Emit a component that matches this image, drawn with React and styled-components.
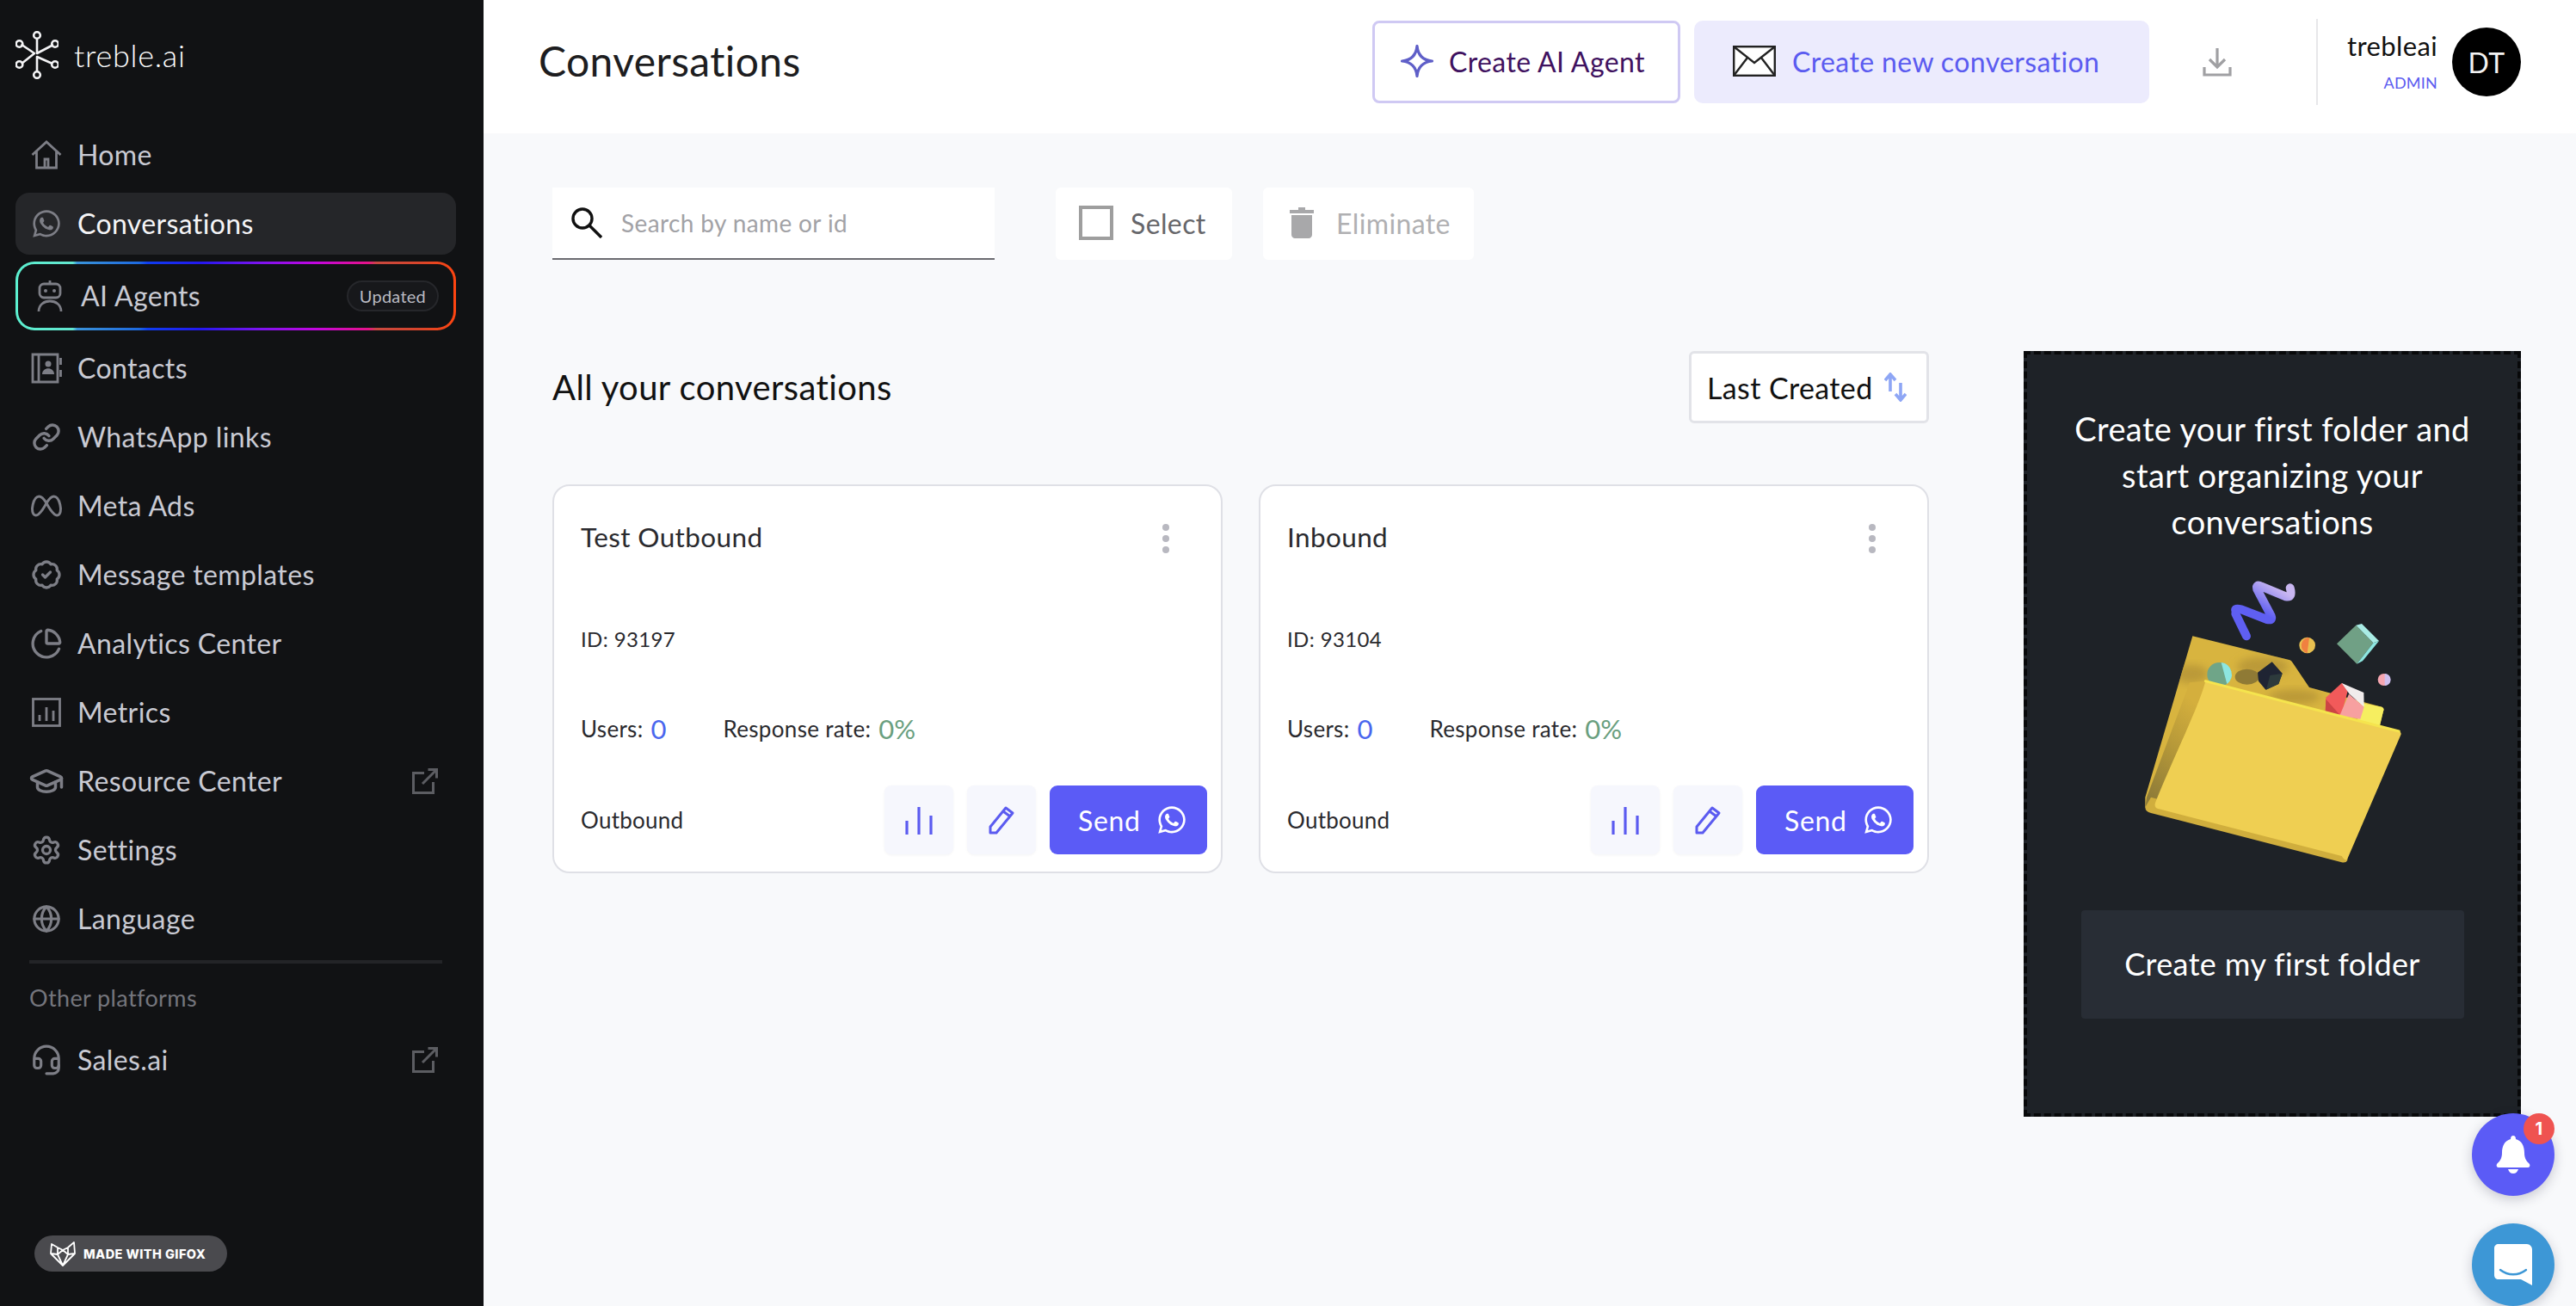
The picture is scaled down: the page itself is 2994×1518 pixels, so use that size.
import React from "react";
import styled, { createGlobalStyle } from "styled-components";
import { FaWhatsapp } from "react-icons/fa";
import { TbBrandMeta } from "react-icons/tb";
import { Link as LinkIcon, BadgeCheck, ChartPie, GraduationCap, Settings, Globe, Headset } from "lucide-react";

const Global = createGlobalStyle`
  html, body { margin: 0; padding: 0; background: #f8f9fb; }
  * { box-sizing: border-box; }
  body { font-family: "Lato", "Inter", sans-serif; letter-spacing: 0.024em; }
`;

const Page = styled.div`
  position: relative;
  display: flex;
  width: 2994px;
  height: 1518px;
  overflow: hidden;
`;

const Sidebar = styled.aside`
  width: 562px;
  flex: none;
  display: flex;
  flex-direction: column;
  background: #111214;
  padding: 0 32px 40px 18px;
  color: #c9cad3;
`;

const LogoRow = styled.div`
  height: 144px;
  padding-top: 36px;
  display: flex;
  align-items: flex-start;
  gap: 18px;
`;

const LogoText = styled.span`
  font-size: 36px;
  font-weight: 300;
  line-height: 56px;
  color: #fff;
  letter-spacing: 0.02em;
`;

const NavList = styled.nav`
  display: flex;
  flex-direction: column;
  gap: 8px;
`;

const NavRow = styled.div`
  height: 72px;
  display: flex;
  align-items: center;
  gap: 18px;
  padding: 0 21px 0 18px;
  border-radius: 16px;
  font-size: 32px;
  background: ${(p) => (p.$active ? "#252629" : "transparent")};
  color: ${(p) => (p.$active ? "#f5f5f7" : "#c9cad3")};
`;

const GradientRow = styled(NavRow)`
  height: 80px;
  padding: 0 17px 0 19px;
  border: 3.5px solid transparent;
  border-radius: 22px;
  background:
    linear-gradient(#111214, #111214) padding-box,
    linear-gradient(90deg, #5cf0d0 0%, #62e6cf 13%, #3a93d9 14%, #1e6ae0 28%, #0f3df0 30%, #2418f0 42%, #7a14f0 55%, #c206e0 68%, #e5128a 80%, #c84840 82%, #d9452a 92%, #ff4510 100%) border-box;
`;

const NavIcon = styled.span`
  width: 36px;
  height: 36px;
  flex: none;
  display: flex;
  align-items: center;
  justify-content: center;
  color: #7d7e86;
  & > svg { flex: none; }
`;

const NavLabel = styled.span`
  flex: 1;
  white-space: nowrap;
  padding-bottom: 2px;
`;

const UpdatedChip = styled.span`
  height: 36px;
  padding: 0 13px;
  display: flex;
  align-items: center;
  border: 2px solid #26272b;
  border-radius: 18px;
  background: #17181b;
  color: #b9bac2;
  font-size: 20px;
  letter-spacing: 0.012em;
`;

const ExternalMark = styled.span`
  display: flex;
  color: #5c5d62;
`;

const SideRule = styled.div`
  height: 4px;
  margin: 12px 16px 0 16px;
  background: #232427;
`;

const OtherHeading = styled.div`
  margin: 20px 0 16px 16px;
  font-size: 27px;
  line-height: 40px;
  color: #74757c;
`;

const GifoxBadge = styled.div`
  align-self: flex-start;
  margin: auto 0 0 22px;
  width: 224px;
  height: 42px;
  border-radius: 21px;
  background: #4a4a4e;
  color: #fff;
  display: flex;
  align-items: center;
  gap: 9px;
  padding-left: 18px;
  font-family: "Inter", sans-serif;
  font-size: 14.5px;
  font-weight: 800;
  letter-spacing: 0.03em;
  white-space: nowrap;
`;

const Main = styled.main`
  flex: 1;
  min-width: 0;
  display: flex;
  flex-direction: column;
`;

const Header = styled.header`
  height: 155px;
  flex: none;
  background: #fff;
  display: flex;
  padding: 24px 64px 0 64px;
  align-items: flex-start;
`;

const PageTitle = styled.h1`
  flex: 1;
  margin: 0;
  font-size: 48px;
  font-weight: 400;
  line-height: 94px;
  color: #1d1d20;
`;

const OutlineButton = styled.div`
  width: 358px;
  height: 96px;
  display: flex;
  align-items: center;
  gap: 18px;
  padding: 0 0 2px 30px;
  border: 3px solid #cfc9f3;
  border-radius: 8px;
  background: #fff;
  color: #3f1260;
  font-size: 32px;
`;

const SoftButton = styled.div`
  width: 529px;
  height: 96px;
  margin-left: 16px;
  display: flex;
  align-items: center;
  gap: 19px;
  padding: 0 0 2px 45px;
  border-radius: 10px;
  background: #ecebfd;
  color: #5b5bf0;
  font-size: 32px;
  white-space: nowrap;
`;

const DownloadSlot = styled.div`
  width: 194px;
  height: 96px;
  padding-right: 36px;
  display: flex;
  align-items: center;
  justify-content: center;
  color: #a0a0a3;
`;

const UserBox = styled.div`
  width: 238px;
  height: 100px;
  margin-top: -2px;
  border-left: 2px solid #e7e7ea;
  display: flex;
  align-items: center;
  justify-content: flex-end;
  gap: 17px;
`;

const UserText = styled.div`
  display: flex;
  flex-direction: column;
  align-items: flex-end;
  gap: 18px;
  padding-bottom: 2px;
`;

const UserName = styled.span`
  font-size: 31px;
  line-height: 32px;
  color: #111;
`;

const UserRole = styled.span`
  font-size: 18px;
  line-height: 18px;
  color: #5b5bf0;
  letter-spacing: 0.012em;
`;

const Avatar = styled.div`
  width: 80px;
  height: 80px;
  border-radius: 50%;
  background: #000;
  color: #f2f2f2;
  display: flex;
  align-items: center;
  justify-content: center;
  font-size: 32px;
`;

const Content = styled.section`
  flex: 1;
  background: #f8f9fb;
  padding: 63px 0 0 80px;
`;

const Toolbar = styled.div`
  height: 84px;
  display: flex;
`;

const SearchBox = styled.div`
  width: 514px;
  height: 84px;
  background: #fff;
  border-bottom: 2px solid #6b6b70;
  display: flex;
  align-items: center;
  gap: 22px;
  padding-left: 22px;
  font-size: 28px;
  color: #a2a2a6;
`;

const ToolButton = styled.div`
  width: ${(p) => p.$width}px;
  height: 84px;
  margin-left: ${(p) => p.$gap}px;
  background: #fff;
  border-radius: 6px;
  display: flex;
  align-items: center;
  gap: ${(p) => p.$inner}px;
  padding: 0 0 2px ${(p) => p.$pad}px;
  font-size: 32px;
  letter-spacing: 0.012em;
  color: ${(p) => p.$color};
`;

const CheckBox = styled.span`
  width: 40px;
  height: 40px;
  border: 4px solid #9e9e9e;
`;

const Columns = styled.div`
  display: flex;
  gap: 110px;
  margin-top: 106px;
`;

const LeftColumn = styled.div`
  width: 1600px;
`;

const SectionHead = styled.div`
  height: 84px;
  display: flex;
  align-items: center;
  justify-content: space-between;
`;

const SectionTitle = styled.h2`
  margin: 0;
  font-size: 40px;
  font-weight: 400;
  color: #111;
`;

const SortButton = styled.div`
  width: 279px;
  height: 84px;
  background: #fff;
  border: 3px solid #e2e3e8;
  border-radius: 6px;
  display: flex;
  align-items: center;
  gap: 13px;
  padding-left: 18px;
  font-size: 34px;
  color: #111;
  white-space: nowrap;
`;

const CardGrid = styled.div`
  display: grid;
  grid-template-columns: 779px 779px;
  gap: 42px;
  margin-top: 71px;
`;

const Card = styled.article`
  height: 452px;
  background: #fff;
  border: 2.5px solid #dfe0e6;
  border-radius: 20px;
  padding: 31px 16px 0 31px;
  color: #2a2a2e;
`;

const CardTop = styled.div`
  height: 56px;
  display: flex;
  align-items: center;
  justify-content: space-between;
  padding-right: 44px;
  font-size: 31.5px;
`;

const Dots = styled.div`
  display: flex;
  flex-direction: column;
  gap: 5px;
  margin-top: 4px;
`;

const Dot = styled.span`
  width: 8px;
  height: 8px;
  border-radius: 50%;
  background: #b8b8c0;
`;

const IdRow = styled.div`
  height: 40px;
  margin-top: 70px;
  display: flex;
  align-items: center;
  font-size: 24px;
`;

const StatsRow = styled.div`
  height: 40px;
  margin-top: 65px;
  display: flex;
  align-items: center;
  font-size: 26px;
  letter-spacing: 0.012em;
`;

const StatLabel = styled.span`
  margin-left: ${(p) => p.$offset || 0}px;
`;

const StatValue = styled.span`
  margin-left: 9px;
  font-size: 31px;
  letter-spacing: 0;
  color: ${(p) => p.$color};
`;

const CardFoot = styled.div`
  height: 80px;
  margin-top: 46px;
  display: flex;
  align-items: center;
  gap: 16px;
  font-size: 26px;
  letter-spacing: 0.01em;
`;

const FootLabel = styled.span`
  flex: 1;
`;

const IconAction = styled.div`
  width: 80px;
  height: 80px;
  border-radius: 8px;
  background: #f6f7fd;
  box-shadow: 0 1px 3px rgba(60, 60, 90, 0.06);
  display: flex;
  align-items: center;
  justify-content: center;
  color: #5b5bf0;
`;

const SendButton = styled.div`
  width: 183px;
  height: 80px;
  border-radius: 9px;
  background: #5b5bf6;
  color: #fff;
  font-size: 32px;
  letter-spacing: 0.02em;
  display: flex;
  align-items: center;
  justify-content: flex-start;
  gap: 18px;
  padding-left: 33px;
`;

const FolderPanel = styled.aside`
  width: 578px;
  height: 890px;
  background: #1e2227;
  border: 4px dashed #08090a;
  display: flex;
  flex-direction: column;
  align-items: center;
  padding-top: 59px;
  color: #fff;
`;

const PanelText = styled.p`
  margin: 0;
  width: 500px;
  text-align: center;
  font-size: 38px;
  line-height: 54px;
`;

const Illustration = styled.svg`
  margin: 27px 0 0 8px;
  flex: none;
`;

const PanelButton = styled.div`
  width: 445px;
  height: 126px;
  margin-top: 38px;
  padding-bottom: 2px;
  border-radius: 4px;
  background: #282d35;
  display: flex;
  align-items: center;
  justify-content: center;
  font-size: 36px;
`;

const FloatStack = styled.div`
  position: absolute;
  right: 25px;
  bottom: 0;
  display: flex;
  flex-direction: column;
  gap: 32px;
`;

const Fab = styled.div`
  position: relative;
  width: 96px;
  height: 96px;
  border-radius: 50%;
  background: ${(p) => p.$bg};
  box-shadow: 0 4px 14px rgba(30, 30, 60, 0.22);
  display: flex;
  align-items: center;
  justify-content: center;
`;

const FabBadge = styled.span`
  position: absolute;
  top: 0;
  right: 0;
  width: 36px;
  height: 36px;
  border-radius: 50%;
  background: #ef5350;
  color: #fff;
  display: flex;
  align-items: center;
  justify-content: center;
  font-family: "Inter", sans-serif;
  font-size: 20px;
  font-weight: 700;
`;

const Logo = () => (
  <svg width="50" height="56" viewBox="0 0 50 56" fill="none" stroke="#f4f4f6" strokeWidth="2.6">
    <path d="M25 9V26L44 16M6.500 15.500L22 26L7 38M25 47V30L43 38" strokeLinejoin="round" />
    <circle cx="25" cy="5" r="3.800" />
    <circle cx="25" cy="51" r="3.800" />
    <circle cx="4.500" cy="15" r="3.800" />
    <circle cx="46" cy="15" r="3.800" />
    <circle cx="4.500" cy="39" r="3.800" />
    <circle cx="46" cy="39" r="3.800" />
  </svg>
);

const HomeGlyph = () => (
  <svg width="36" height="34" viewBox="0 0 36 34" fill="none" stroke="currentColor" strokeWidth="2.800">
    <path d="M1.500 17L18 2L34.500 17M6.500 13V32H29.500V13M16 32V22H20V32" />
  </svg>
);

const BotGlyph = () => (
  <svg width="30" height="37" viewBox="0 0 30 37" fill="none" stroke="currentColor" strokeWidth="2.800">
    <rect x="3" y="4" width="24" height="16" rx="5" />
    <circle cx="10" cy="12" r="2" fill="currentColor" stroke="none" />
    <circle cx="20" cy="12" r="2" fill="currentColor" stroke="none" />
    <path d="M15 0V4M2 36C2 20 28 20 28 36" />
  </svg>
);

const ContactsGlyph = () => (
  <svg width="36" height="36" viewBox="0 0 36 36" fill="none" stroke="currentColor" strokeWidth="2.800">
    <path d="M2 2H31V34H2ZM9 2V34" />
    <circle cx="20" cy="13" r="3.500" fill="currentColor" stroke="none" />
    <path d="M13 25C13 16 27 16 27 25Z" fill="currentColor" stroke="none" />
    <path d="M34.500 6V14M34.500 20V28" />
  </svg>
);

const MetricsGlyph = () => (
  <svg width="34" height="34" viewBox="0 0 34 34" fill="none" stroke="currentColor" strokeWidth="2.800">
    <rect x="1.500" y="1.500" width="31" height="31" />
    <path d="M9 27V20M17 27V11M25 27V15" />
  </svg>
);

const ExternalGlyph = () => (
  <svg width="30" height="30" viewBox="0 0 30 30" fill="none" stroke="currentColor" strokeWidth="3">
    <path d="M14 5.500H1.500V28.500H24.500V16M12 18L28 2M18.500 1.500H28.500V11.500" />
  </svg>
);

const FoxGlyph = () => (
  <svg width="30" height="30" viewBox="0 0 30 30" fill="none" stroke="#fff" strokeWidth="1.800" strokeLinejoin="round">
    <path d="M2 4L9 8L15 11L21 8L28 2L29 15L15 29L1 15ZM15 11L9 16L15 29L21 16ZM1 15L9 16M29 15L21 16M9 8L9 16M21 8L21 16" />
  </svg>
);

const StarGlyph = () => (
  <svg width="38" height="38" viewBox="0 0 38 38" fill="none" stroke="#5f5fc8" strokeWidth="3.200" strokeLinejoin="round">
    <path d="M19 1.500C20 12 26 18 36.500 19C26 20 20 26 19 36.500C18 26 12 20 1.500 19C12 18 18 12 19 1.500Z" />
  </svg>
);

const EnvelopeGlyph = () => (
  <svg width="50" height="36" viewBox="0 0 50 36" fill="#fff" stroke="#222" strokeWidth="2.400">
    <rect x="1.200" y="1.200" width="47.600" height="33.600" />
    <path d="M1.200 1.200L25 20L48.800 1.200M1.200 34.800L17 14M48.800 34.800L33 14" fill="none" />
  </svg>
);

const DownloadGlyph = () => (
  <svg width="34" height="34" viewBox="0 0 34 34" fill="none" stroke="currentColor" strokeWidth="3.200">
    <path d="M17 1V23M8 14L17 23L26 14" />
    <path d="M2 23V32H32V23" />
  </svg>
);

const SearchGlyph = () => (
  <svg width="36" height="36" viewBox="0 0 36 36" fill="none" stroke="#111" strokeWidth="3.400">
    <circle cx="13" cy="13" r="11" />
    <path d="M21 21L35 35" />
  </svg>
);

const TrashGlyph = () => (
  <svg width="28" height="36" viewBox="0 0 28 36" fill="#a8a8aa">
    <path d="M10 0H18V3H28V7H0V3H10Z" />
    <path d="M2 9H26V32C26 34 24 36 22 36H6C4 36 2 34 2 32Z" />
  </svg>
);

const SortGlyph = () => (
  <svg width="26" height="34" viewBox="0 0 26 34" fill="none" stroke="#8ea6f5" strokeWidth="3.600">
    <path d="M7 22V3M1 9L7 2L13 9M19 12V32M13 25L19 32L25 25" />
  </svg>
);

const BarsGlyph = () => (
  <svg width="32" height="34" viewBox="0 0 32 34" fill="none" stroke="currentColor" strokeWidth="3.200">
    <path d="M2 34V18M16 34V2M30 34V12" />
  </svg>
);

const PencilGlyph = () => (
  <svg width="32" height="34" viewBox="0 0 32 34" fill="none" stroke="currentColor" strokeWidth="3" strokeLinejoin="round">
    <path d="M3 25L21 3L29 9L10 32H3ZM18 7L26 13" />
  </svg>
);

const BellGlyph = () => (
  <svg width="40" height="44" viewBox="0 0 40 44" fill="#fff">
    <path d="M20 0C22 0 23 1.500 23 4C30 6 33 12 33 20C33 27 36 30 39 33C40 35 39 37 37 37H3C1 37 0 35 1 33C4 30 7 27 7 20C7 12 10 6 17 4C17 1.500 18 0 20 0Z" />
    <path d="M14 39H26C25 42 23 44 20 44C17 44 15 42 14 39Z" />
  </svg>
);

const ChatGlyph = () => (
  <svg width="44" height="48" viewBox="0 0 44 48" fill="#fff">
    <path d="M5 0H38C41 0 44 3 44 6V48L31 41H5C2 41 0 39 0 36V5C0 2 2 0 5 0Z" />
    <path d="M7 30C16 37 28 37 37 30" fill="none" stroke="#3d97d6" strokeWidth="2.400" strokeLinecap="round" />
  </svg>
);

const FolderArt = () => (
  <Illustration width="330" height="360" viewBox="0 0 990 1080">
    <defs>
      <linearGradient id="squiggle" x1="0" y1="1" x2="1" y2="0">
        <stop offset="0.35" stopColor="#5f5ff2" />
        <stop offset="0.85" stopColor="#c8b6f0" />
      </linearGradient>
      <linearGradient id="leftShade" x1="0" y1="1" x2="0.4" y2="0">
        <stop offset="0.1" stopColor="#8f7c38" />
        <stop offset="0.6" stopColor="#b89a39" />
        <stop offset="1" stopColor="#d4af3d" />
      </linearGradient>
      <filter id="soft" x="-30%" y="-30%" width="160%" height="160%">
        <feGaussianBlur stdDeviation="14" />
      </filter>
      <clipPath id="backClip">
        <path d="M205 238L545 322Q550 324 555 332L612 417L865 485Q875 490 870 500L858 550L70 850L40 835V800Z" />
      </clipPath>
    </defs>
    <path d="M355 150Q350 140 375 145L465 180Q490 185 475 160L430 75Q425 55 445 65L530 100Q555 105 545 70" fill="none" stroke="url(#squiggle)" strokeWidth="30" strokeLinecap="round" strokeLinejoin="round" />
    <path d="M355 160L393 238" fill="none" stroke="#5f5ff2" strokeWidth="30" strokeLinecap="round" />
    <path d="M205 238L545 322Q550 324 555 332L612 417L865 485Q875 490 870 500L858 550L70 850L40 835V800Z" fill="#d8b43f" />
    <g clipPath="url(#backClip)">
      <ellipse cx="200" cy="370" rx="60" ry="32" fill="#bb9a39" filter="url(#soft)" />
      <ellipse cx="450" cy="345" rx="90" ry="34" fill="#bb9a39" filter="url(#soft)" />
      <ellipse cx="560" cy="450" rx="90" ry="26" fill="#bb9a39" filter="url(#soft)" />
    </g>
    <path d="M790 470L865 485Q875 490 870 500L858 550L780 530Z" fill="#f6ee60" />
    <path d="M40 835L45 800L195 400L250 395C230 480 120 700 75 835Z" fill="url(#leftShade)" />
    <ellipse cx="395" cy="380" rx="42" ry="27" fill="#8f7a35" />
    <circle cx="298" cy="372" r="42" fill="#6fa588" />
    <path d="M305 330A42 42 0 0 1 325 405Z" fill="#8de6e0" />
    <path d="M432 365L482 328L518 368L505 405L460 425L435 395Z" fill="#1f2433" />
    <path d="M475 375L518 368L505 405L462 425Z" fill="#2d3a3c" />
    <path d="M670 452L725 402L750 415L722 520L668 505Z" fill="#f25a5a" />
    <path d="M670 458L718 512L668 505Z" fill="#cc4444" />
    <path d="M725 402L802 435L803 485L752 440Z" fill="#f1ecec" />
    <path d="M750 440L803 485L790 527L718 515Z" fill="#f7a0a0" />
    <circle cx="605" cy="270" r="28" fill="#e8c050" />
    <path d="M612 243A28 28 0 0 0 605 298Z" fill="#f08040" />
    <path d="M708 265L775 200L835 262L778 335Z" fill="#70a085" />
    <path d="M775 200L795 195L855 255L835 262Z" fill="#a9ece5" />
    <path d="M835 262L855 255L798 325L778 335Z" fill="#8de6e0" />
    <circle cx="872" cy="390" r="21" fill="#f6a6b0" />
    <path d="M875 369A21 21 0 0 1 875 411Z" fill="#cfc0ef" />
    <path d="M40 835Q40 850 60 855L725 1027Q740 1030 745 1020L745 980L60 800Z" fill="#d0ae3d" />
    <path d="M250 395L925 570Q936 575 930 585L745 1015Q738 1025 725 1005L85 840Q70 835 75 820C120 700 230 480 250 395Z" fill="#efcf52" />
    <path d="M250 395L925 570" fill="none" stroke="#f5e44e" strokeWidth="9" strokeLinecap="round" />
  </Illustration>
);

const navTop = [
  { label: "WhatsApp links", icon: <LinkIcon size={34} strokeWidth={2.4} /> },
  { label: "Meta Ads", icon: <TbBrandMeta size={44} strokeWidth={1.6} /> },
  { label: "Message templates", icon: <BadgeCheck size={36} strokeWidth={2.2} /> },
  { label: "Analytics Center", icon: <ChartPie size={38} strokeWidth={2.1} /> },
  { label: "Metrics", icon: <MetricsGlyph /> },
  { label: "Resource Center", icon: <GraduationCap size={42} strokeWidth={2} />, external: true },
  { label: "Settings", icon: <Settings size={36} strokeWidth={2.2} /> },
  { label: "Language", icon: <Globe size={34} strokeWidth={2.2} /> },
];

const cards = [
  { title: "Test Outbound", id: "93197" },
  { title: "Inbound", id: "93104" },
];

export default function App() {
  return (
    <Page>
      <Global />
      <Sidebar>
        <LogoRow>
          <Logo />
          <LogoText>treble.ai</LogoText>
        </LogoRow>
        <NavList>
          <NavRow>
            <NavIcon><HomeGlyph /></NavIcon>
            <NavLabel>Home</NavLabel>
          </NavRow>
          <NavRow $active>
            <NavIcon><FaWhatsapp size={36} /></NavIcon>
            <NavLabel>Conversations</NavLabel>
          </NavRow>
          <GradientRow>
            <NavIcon><BotGlyph /></NavIcon>
            <NavLabel>AI Agents</NavLabel>
            <UpdatedChip>Updated</UpdatedChip>
          </GradientRow>
          <NavRow>
            <NavIcon><ContactsGlyph /></NavIcon>
            <NavLabel>Contacts</NavLabel>
          </NavRow>
          {navTop.map((item) => (
            <NavRow key={item.label}>
              <NavIcon>{item.icon}</NavIcon>
              <NavLabel>{item.label}</NavLabel>
              {item.external && <ExternalMark><ExternalGlyph /></ExternalMark>}
            </NavRow>
          ))}
        </NavList>
        <SideRule />
        <OtherHeading>Other platforms</OtherHeading>
        <NavRow>
          <NavIcon><Headset size={38} strokeWidth={2} /></NavIcon>
          <NavLabel>Sales.ai</NavLabel>
          <ExternalMark><ExternalGlyph /></ExternalMark>
        </NavRow>
        <GifoxBadge>
          <FoxGlyph />
          MADE WITH GIFOX
        </GifoxBadge>
      </Sidebar>
      <Main>
        <Header>
          <PageTitle>Conversations</PageTitle>
          <OutlineButton>
            <StarGlyph />
            Create AI Agent
          </OutlineButton>
          <SoftButton>
            <EnvelopeGlyph />
            Create new conversation
          </SoftButton>
          <DownloadSlot><DownloadGlyph /></DownloadSlot>
          <UserBox>
            <UserText>
              <UserName>trebleai</UserName>
              <UserRole>ADMIN</UserRole>
            </UserText>
            <Avatar>DT</Avatar>
          </UserBox>
        </Header>
        <Content>
          <Toolbar>
            <SearchBox>
              <SearchGlyph />
              Search by name or id
            </SearchBox>
            <ToolButton $width={205} $gap={71} $inner={20} $pad={27} $color="#66666a">
              <CheckBox />
              Select
            </ToolButton>
            <ToolButton $width={245} $gap={36} $inner={26} $pad={31} $color="#b0b0b2">
              <TrashGlyph />
              Eliminate
            </ToolButton>
          </Toolbar>
          <Columns>
            <LeftColumn>
              <SectionHead>
                <SectionTitle>All your conversations</SectionTitle>
                <SortButton>
                  Last Created
                  <SortGlyph />
                </SortButton>
              </SectionHead>
              <CardGrid>
                {cards.map((card) => (
                  <Card key={card.id}>
                    <CardTop>
                      <span>{card.title}</span>
                      <Dots><Dot /><Dot /><Dot /></Dots>
                    </CardTop>
                    <IdRow>ID: {card.id}</IdRow>
                    <StatsRow>
                      <StatLabel>Users:</StatLabel>
                      <StatValue $color="#4a66ee">0</StatValue>
                      <StatLabel $offset={66}>Response rate:</StatLabel>
                      <StatValue $color="#6a9f7f">0%</StatValue>
                    </StatsRow>
                    <CardFoot>
                      <FootLabel>Outbound</FootLabel>
                      <IconAction><BarsGlyph /></IconAction>
                      <IconAction><PencilGlyph /></IconAction>
                      <SendButton>
                        Send
                        <FaWhatsapp size={36} />
                      </SendButton>
                    </CardFoot>
                  </Card>
                ))}
              </CardGrid>
            </LeftColumn>
            <FolderPanel>
              <PanelText>Create your first folder and start organizing your conversations</PanelText>
              <FolderArt />
              <PanelButton>Create my first folder</PanelButton>
            </FolderPanel>
          </Columns>
        </Content>
      </Main>
      <FloatStack>
        <Fab $bg="#5b5bf6">
          <BellGlyph />
          <FabBadge>1</FabBadge>
        </Fab>
        <Fab $bg="#3d97d6">
          <ChatGlyph />
        </Fab>
      </FloatStack>
    </Page>
  );
}
